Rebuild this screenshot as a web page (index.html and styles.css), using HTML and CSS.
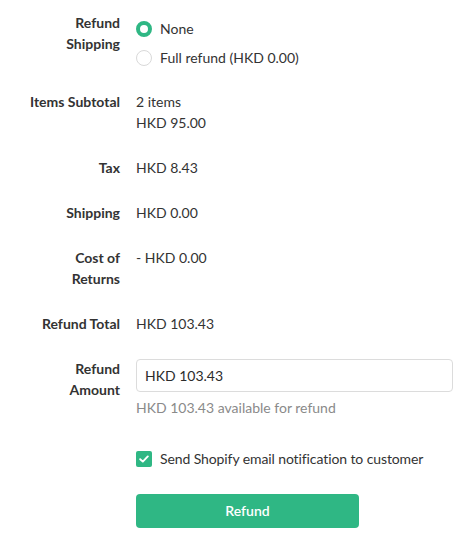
FILE: index.html
```html
<!DOCTYPE html>
<html lang="en">
<head>
<meta charset="utf-8">
<link rel="stylesheet" href="styles.css">
</head>
<body>
<form class="refund-form">
  <div class="label">Refund<br>Shipping</div>
  <div class="value radios">
    <label class="radio-item"><span class="radio checked"></span>None</label>
    <label class="radio-item"><span class="radio"></span>Full refund (HKD 0.00)</label>
  </div>

  <div class="label">Items Subtotal</div>
  <div class="value">2 items<br>HKD 95.00</div>

  <div class="label">Tax</div>
  <div class="value">HKD 8.43</div>

  <div class="label">Shipping</div>
  <div class="value">HKD 0.00</div>

  <div class="label">Cost of<br>Returns</div>
  <div class="value">- HKD 0.00</div>

  <div class="label">Refund Total</div>
  <div class="value">HKD 103.43</div>

  <div class="label">Refund<br>Amount</div>
  <div class="value">
    <div class="input">HKD 103.43</div>
    <div class="help">HKD 103.43 available for refund</div>
  </div>

  <div class="label"></div>
  <div class="value notify">
    <span class="checkbox">
      <svg width="10" height="8" viewBox="0 0 10 8"><path d="M1.2 4.2 L3.8 6.6 L8.8 1.4" fill="none" stroke="#fff" stroke-width="1.9" stroke-linecap="round" stroke-linejoin="round"/></svg>
    </span>
    Send Shopify email notification to customer
  </div>

  <div class="label"></div>
  <div class="value">
    <div class="button">Refund</div>
  </div>
</form>
</body>
</html>
```

FILE: styles.css
```css
html, body {
  margin: 0;
  padding: 0;
  background: #fff;
}
body {
  font-family: Lato, "Open Sans", sans-serif;
  font-size: 14px;
  line-height: 21px;
  color: #333;
}
.refund-form {
  display: grid;
  grid-template-columns: 120px 1fr;
  column-gap: 16px;
  row-gap: 24px;
  padding: 12px 20px 0 0;
}
.label {
  text-align: right;
  font-weight: 700;
  color: #333;
}
.value {
  color: #333;
}
.radios {
  display: flex;
  flex-direction: column;
  gap: 8px;
  padding-top: 6px;
  margin-bottom: -1px;
}
.radio-item {
  display: flex;
  align-items: center;
  gap: 8px;
  color: #333;
}
.radio {
  width: 16px;
  height: 16px;
  box-sizing: border-box;
  border-radius: 50%;
  border: 1px solid #d9d9d9;
  background: #fff;
}
.radio.checked {
  border: 4.5px solid #2fb784;
}
.input {
  box-sizing: border-box;
  height: 33px;
  margin-top: 1px;
  border: 1px solid #dcdcdc;
  border-radius: 4px;
  padding: 0 8px;
  line-height: 31px;
  color: #2b2b2b;
}
.help {
  margin-top: 5px;
  color: #8a8a8a;
}
.notify {
  display: flex;
  align-items: center;
  gap: 8px;
  margin-top: 6px;
  color: #333;
  letter-spacing: -0.1px;
}
.checkbox {
  width: 16px;
  height: 16px;
  border-radius: 2px;
  background: #2fb784;
  display: flex;
  align-items: center;
  justify-content: center;
}
.button {
  width: 223px;
  height: 34px;
  margin-top: 1px;
  border-radius: 4px;
  background: #2fb784;
  color: #fff;
  font-weight: 600;
  text-align: center;
  line-height: 34px;
}
```
